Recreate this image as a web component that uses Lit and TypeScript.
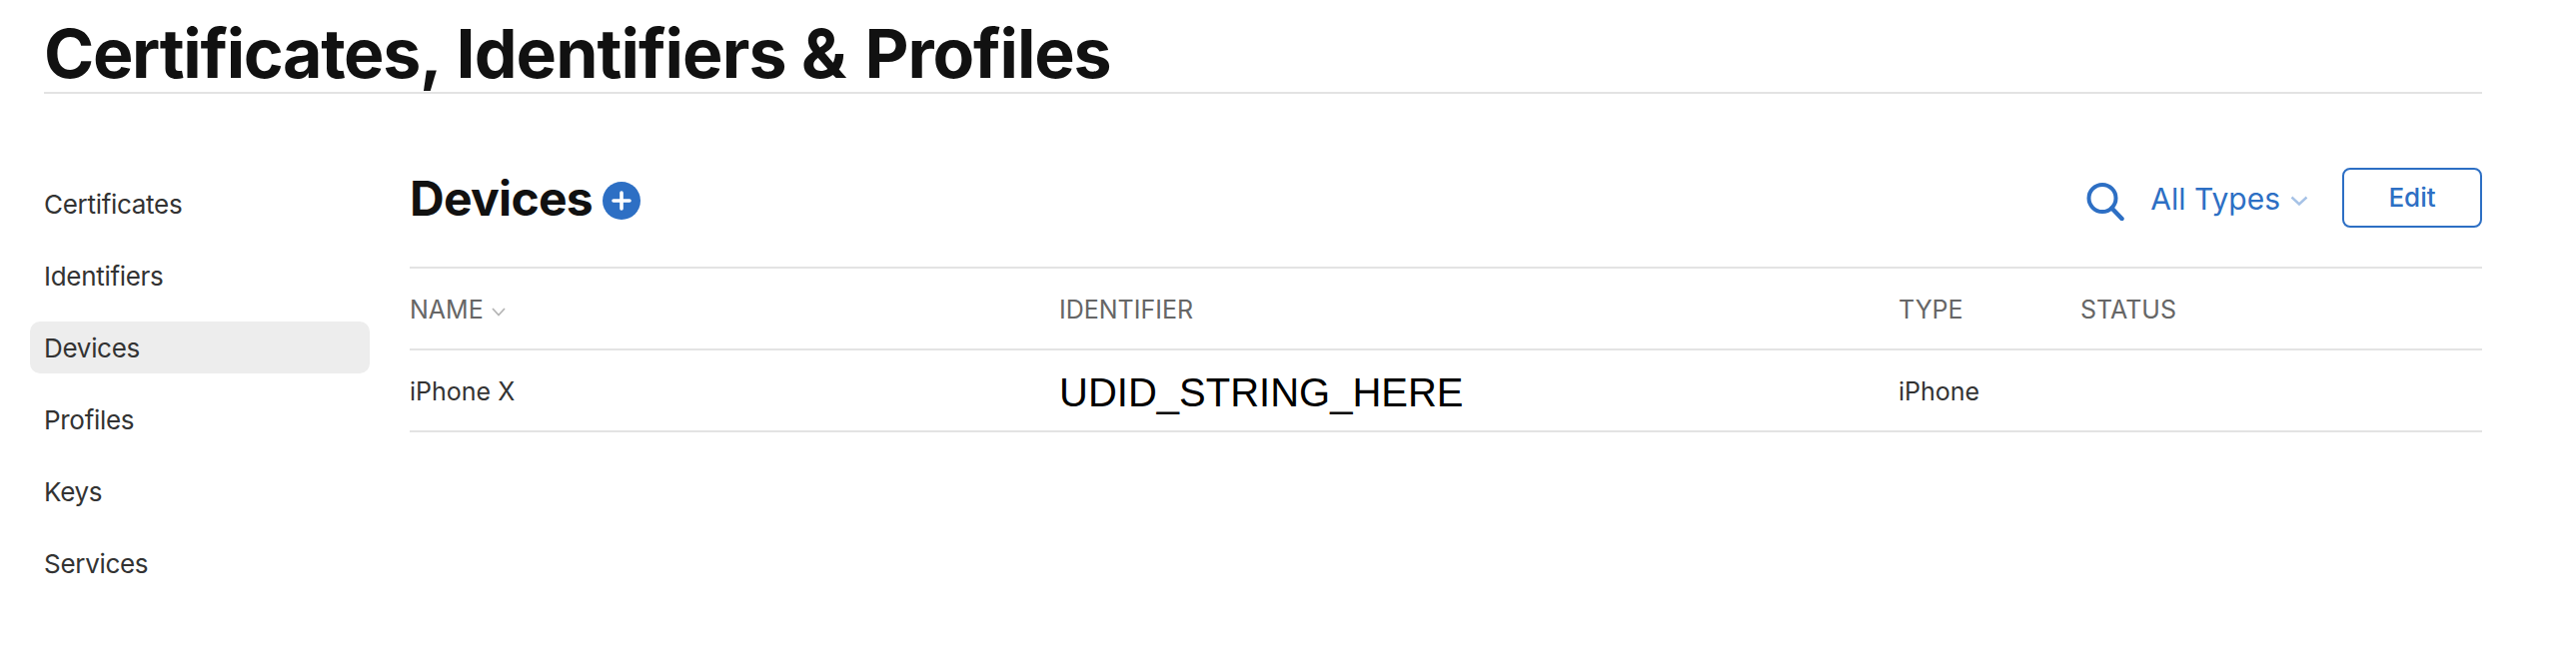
import { LitElement, html, css } from "lit";
import { customElement } from "lit/decorators.js";

const NAV = ["Certificates", "Identifiers", "Devices", "Profiles", "Keys", "Services"];

@customElement("app-root")
export class AppRoot extends LitElement {
  static styles = css`
    :host { display: block; width: 2578px; height: 662px; background: #fff; overflow: hidden; font-family: Inter, "Liberation Sans", sans-serif; color: #111; box-sizing: border-box; padding: 0 94px 0 44px; }
    .title { margin: 0; height: 92px; border-bottom: 2px solid #e3e3e3; box-sizing: content-box; font-size: 68px; line-height: 106px; font-weight: 700; letter-spacing: -0.95px; white-space: nowrap; }
    .tight { letter-spacing: -1.35px; }
    .amp { letter-spacing: 3px; }
    .last { letter-spacing: -1.1px; }
    .body { display: flex; margin-top: 74px; }
    nav { width: 380px; margin-left: -14px; display: flex; flex-direction: column; gap: 20px; padding-top: 10px; flex: none; }
    .item { width: 340px; height: 52px; border-radius: 10px; padding-left: 14px; box-sizing: border-box; font-size: 26px; line-height: 53px; color: #333; letter-spacing: -0.3px; }
    .item.on { background: #ededed; }
    main { flex: 1; min-width: 0; }
    .head { height: 99px; display: flex; align-items: flex-start; border-bottom: 2px solid #e3e3e3; }
    h2 { margin: 2px 0 0; font-size: 48px; line-height: 58px; font-weight: 700; letter-spacing: -0.7px; }
    .add { margin: 14px 0 0 10px; display: block; }
    .tools { margin-left: auto; display: flex; align-items: flex-start; }
    .search { display: block; margin: 15px 26px 0 0; }
    .types { color: #2d6fc4; font-size: 30px; line-height: 40px; margin-top: 11px; }
    .chev { display: block; margin: 28px 34px 0 10px; }
    .edit { width: 140px; height: 60px; box-sizing: border-box; border: 2px solid #2d6fc4; border-radius: 8px; color: #2d6fc4; font-size: 26px; font-weight: 500; display: flex; align-items: center; justify-content: center; padding-bottom: 2px; }
    .row { display: grid; grid-template-columns: 650px 840px 182px 1fr; height: 80px; align-items: center; border-bottom: 2px solid #e3e3e3; }
    .th { font-size: 25px; color: #666; display: flex; align-items: center; padding-top: 2px; }
    .th svg { margin-left: 8px; margin-top: 4px; }
    .td { font-size: 25px; color: #333; padding-top: 1px; }
    .udid { font-family: "Liberation Sans", Arial, sans-serif; font-size: 40px; color: #000; line-height: 48px; padding-top: 4px; }
  `;

  render() {
    return html`
      <h1 class="title"><span class="tight">Certificates,</span> Identifiers <span class="amp">&amp;</span> <span class="last">Profiles</span></h1>
      <div class="body">
        <nav>${NAV.map((n) => html`<div class="item ${n === "Devices" ? "on" : ""}">${n}</div>`)}</nav>
        <main>
          <div class="head">
            <h2>Devices</h2>
            <svg class="add" width="38" height="38" viewBox="0 0 38 38"><circle cx="19" cy="19" r="19" fill="#2d6fc4"/><path d="M19 11v16M11 19h16" stroke="#fff" stroke-width="3.6" stroke-linecap="round"/></svg>
            <div class="tools">
              <svg class="search" width="38" height="38" viewBox="0 0 38 38" fill="none" stroke="#2d6fc4"><circle cx="16" cy="15.5" r="13.5" stroke-width="4"/><path d="M25.5 25.5 35.5 36" stroke-width="4.5" stroke-linecap="round"/></svg>
              <span class="types">All Types</span>
              <svg class="chev" width="18" height="10" viewBox="0 0 18 10" fill="none"><path d="M1.5 1.5 9 8.5l7.5-7" stroke="#a6c2e6" stroke-width="2.4"/></svg>
              <div class="edit">Edit</div>
            </div>
          </div>
          <div class="row">
            <div class="th">NAME<svg width="14" height="9" viewBox="0 0 14 9" fill="none"><path d="M1 1l6 6.5L13 1" stroke="#b5b5b5" stroke-width="1.8"/></svg></div>
            <div class="th">IDENTIFIER</div>
            <div class="th">TYPE</div>
            <div class="th">STATUS</div>
          </div>
          <div class="row">
            <div class="td">iPhone X</div>
            <div class="udid">UDID_STRING_HERE</div>
            <div class="td">iPhone</div>
            <div></div>
          </div>
        </main>
      </div>
    `;
  }
}
